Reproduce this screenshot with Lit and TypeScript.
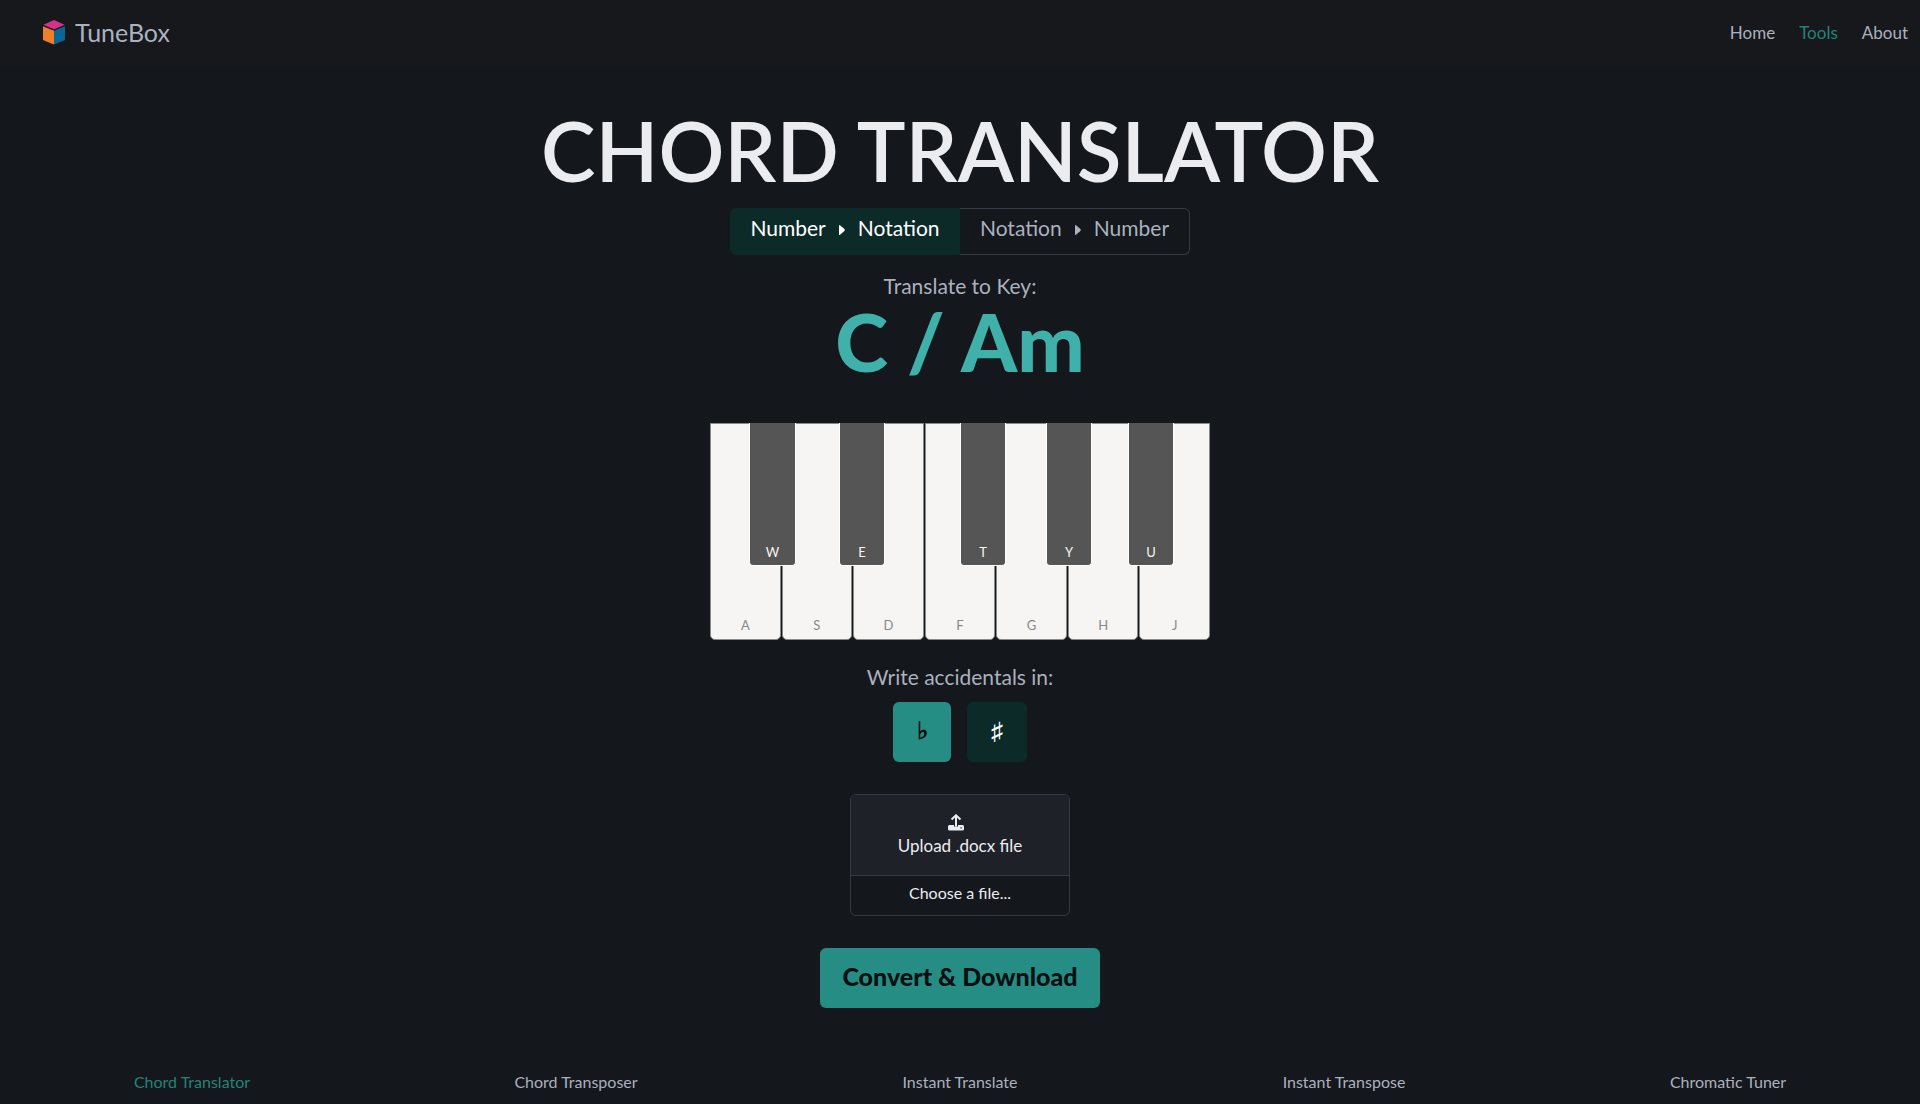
import { LitElement, html, css, svg } from "lit";
import { customElement, state } from "lit/decorators.js";
import { classMap } from "lit/directives/class-map.js";

const WHITE_KEYS = ["A", "S", "D", "F", "G", "H", "J"];
const BLACK_KEYS = ["W", "E", "T", "Y", "U"];
const TOOLS = [
  "Chord Translator",
  "Chord Transposer",
  "Instant Translate",
  "Instant Transpose",
  "Chromatic Tuner",
];

const caret = svg`<svg class="caret" viewBox="0 0 8 12" width="8" height="12" aria-hidden="true"><path d="M1 1.600Q1 .6 2 1.200L6.400 5Q7.400 6 6.400 7L2 10.800Q1 11.400 1 10.400Z" fill="currentColor"/></svg>`;

@customElement("tune-piano")
export class TunePiano extends LitElement {
  static styles = css`
    :host {
      display: block;
    }
    .piano {
      position: relative;
      display: grid;
      grid-template-columns: repeat(7, 1fr);
      gap: 1px;
      width: 500px;
      max-width: 100%;
      height: 217px;
    }
    .key {
      display: flex;
      align-items: flex-end;
      justify-content: center;
      box-sizing: border-box;
      margin: 0;
      font: 400 13px/16px Lato, "Liberation Sans", sans-serif;
      cursor: pointer;
    }
    .white {
      padding: 0 0 6px;
      background: #f6f5f3;
      border: 1px solid #888a8a;
      border-radius: 0 0 5px 5px;
      color: #888;
    }
    .black {
      position: absolute;
      top: 0;
      width: 46px;
      height: 143px;
      padding: 0 0 5px;
      background: #555;
      border: 1px solid #fff;
      border-top: 0;
      border-radius: 0 0 4px 4px;
      color: #f6f5f3;
    }
    .w { left: 39px; width: 47px; }
    .e { left: 129px; }
    .t { left: 250px; }
    .y { left: 336px; }
    .u { left: 418px; }
  `;

  render() {
    return html`<div class="piano">
      ${WHITE_KEYS.map((k) => html`<button class="key white">${k}</button>`)}
      ${BLACK_KEYS.map(
        (k) => html`<button class="key black ${k.toLowerCase()}">${k}</button>`
      )}
    </div>`;
  }
}

@customElement("app-root")
export class AppRoot extends LitElement {
  @state() private toNotation = true;
  @state() private flats = true;

  static styles = css`
    :host {
      display: flex;
      flex-direction: column;
      min-height: 100vh;
      background: #14171b;
      color: #abb1bf;
      font: 400 16px/24px Lato, "Liberation Sans", sans-serif;
    }
    a {
      color: inherit;
      text-decoration: none;
    }
    button {
      margin: 0;
      border: 0;
      font: inherit;
      cursor: pointer;
    }
    .topbar {
      display: flex;
      justify-content: space-between;
      align-items: center;
      height: 66px;
      background: #17181c;
    }
    .brand {
      display: flex;
      align-items: center;
      gap: 9px;
      padding: 0 0 2px 42px;
      font-size: 25px;
    }
    .menu {
      display: flex;
      font-size: 17px;
    }
    .menu a {
      padding: 8px 12px;
    }
    .active {
      color: #218578;
    }
    main {
      display: flex;
      flex-direction: column;
      align-items: center;
      flex: 1;
    }
    h1 {
      margin: 37px 0 10px;
      color: #ebecf0;
      font-size: 82px;
      font-weight: 600;
      line-height: 95px;
    }
    .toggle {
      display: flex;
    }
    .toggle button {
      box-sizing: border-box;
      width: 230px;
      height: 47px;
      padding: 0 0 7px;
      border: 1px solid #353a46;
      background: transparent;
      color: #abb1bf;
      font-size: 21px;
    }
    .toggle button:first-child {
      border-radius: 6px 0 0 6px;
    }
    .toggle button:last-child {
      border-radius: 0 6px 6px 0;
      border-left: 0;
    }
    .toggle .on {
      background: #0c2b28;
      border-color: #0c2b28;
      color: #fff;
    }
    .caret {
      margin: 0 12px;
    }
    .label {
      margin: 0;
      font-size: 21px;
      line-height: 30px;
    }
    .to-key {
      margin-top: 16px;
    }
    .key-name {
      margin: 0 0 42px;
      color: #3fb1aa;
      font-size: 80px;
      font-weight: 900;
      line-height: 80px;
    }
    .write {
      margin-top: 22px;
    }
    .accidentals {
      display: flex;
      gap: 16px;
      margin: 10px 0 32px;
    }
    .accidentals button {
      min-width: 58px;
      height: 60px;
      padding: 0 0 4px;
      border-radius: 6px;
      background: #0c2b28;
      color: #fff;
      font-size: 24px;
      font-weight: 700;
    }
    .accidentals button:last-child {
      min-width: 60px;
    }
    .accidentals .on {
      background: #268d84;
      color: #0a0f10;
    }
    .file {
      display: flex;
      flex-direction: column;
      align-items: center;
      box-sizing: border-box;
      width: 220px;
      border: 1px solid #353a46;
      border-radius: 6px;
      overflow: hidden;
      color: #ebecf0;
      cursor: pointer;
    }
    .file input {
      position: absolute;
      width: 1px;
      height: 1px;
      opacity: 0;
    }
    .cta {
      display: flex;
      flex-direction: column;
      align-items: center;
      align-self: stretch;
      padding: 19px 0 17px;
      background: #1f2129;
      border-bottom: 1px solid #353a46;
      font-size: 17px;
    }
    .cta svg {
      margin-right: 8px;
    }
    .cta-text {
      margin-top: 3px;
    }
    .file-name {
      padding: 5px 0 10px;
    }
    .convert {
      margin-top: 32px;
      width: 280px;
      height: 60px;
      padding: 0 0 5px;
      border-radius: 6px;
      background: #268d84;
      color: #0a0f10;
      font-size: 25px;
      font-weight: 900;
    }
    .bottombar {
      display: grid;
      grid-template-columns: repeat(5, 1fr);
      padding: 10px 0;
      text-align: center;
    }
  `;

  render() {
    return html`
      <header class="topbar">
        <a class="brand" href="#">
          <svg width="24" height="26" viewBox="0 0 24 26" aria-hidden="true">
            <path d="M12 1 23 6V21L12 26 1 21V6Z" fill="#22202c" />
            <path d="M12 1 22.500 5.800 12 10.300 1.500 5.800Z" fill="#d6308c" />
            <path d="M1 7.500 12 11.800V25.500L1 21Z" fill="#ef7f28" />
            <path d="M23 7.500 12 11.800V25.500L23 21Z" fill="#086793" />
          </svg>
          <span>TuneBox</span>
        </a>
        <nav class="menu">
          <a href="#home">Home</a>
          <a class="active" href="#tools">Tools</a>
          <a href="#about">About</a>
        </nav>
      </header>
      <main>
        <h1>CHORD TRANSLATOR</h1>
        <div class="toggle">
          <button class=${classMap({ on: this.toNotation })} @click=${() => (this.toNotation = true)}>
            Number${caret}Notation
          </button>
          <button class=${classMap({ on: !this.toNotation })} @click=${() => (this.toNotation = false)}>
            Notation${caret}Number
          </button>
        </div>
        <p class="label to-key">Translate to Key:</p>
        <p class="key-name">C / Am</p>
        <tune-piano></tune-piano>
        <p class="label write">Write accidentals in:</p>
        <div class="accidentals">
          <button class=${classMap({ on: this.flats })} @click=${() => (this.flats = true)}>♭</button>
          <button class=${classMap({ on: !this.flats })} @click=${() => (this.flats = false)}>♯</button>
        </div>
        <label class="file">
          <input type="file" accept=".docx" />
          <span class="cta">
            <svg width="16" height="17" viewBox="0 0 16 17" aria-hidden="true">
              <path d="M1.5 11H6v1.5h4V11h4.500Q16 11 16 12.500V15Q16 16.500 14.500 16.500H1.500Q0 16.500 0 15V12.500Q0 11 1.500 11Z" fill="currentColor" />
              <path d="M8 12.500V2M3.500 5.500 8 1.300 12.500 5.500" fill="none" stroke="currentColor" stroke-width="2" />
              <path d="M12.500 13.200h1.200v1.200h-1.200z" fill="#1f2129" />
            </svg>
            <span class="cta-text">Upload .docx file</span>
          </span>
          <span class="file-name">Choose a file...</span>
        </label>
        <button class="convert">Convert &amp; Download</button>
      </main>
      <nav class="bottombar">
        ${TOOLS.map(
          (t, i) => html`<span><a class=${classMap({ active: i === 0 })} href="#tool-${i}">${t}</a></span>`
        )}
      </nav>
    `;
  }
}
